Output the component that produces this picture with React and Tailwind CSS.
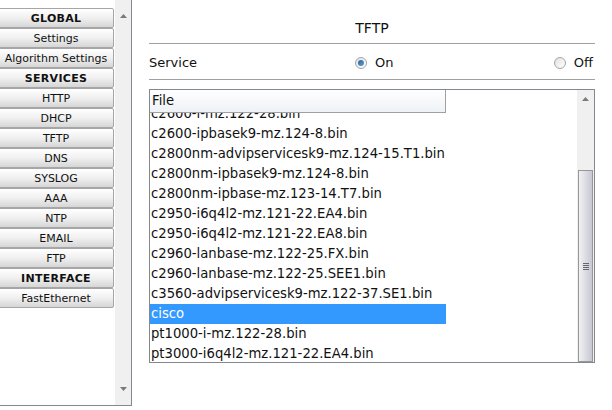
import React from "react";

const menu = [
  { label: "GLOBAL", head: true },
  { label: "Settings" },
  { label: "Algorithm Settings" },
  { label: "SERVICES", head: true },
  { label: "HTTP" },
  { label: "DHCP" },
  { label: "TFTP" },
  { label: "DNS" },
  { label: "SYSLOG" },
  { label: "AAA" },
  { label: "NTP" },
  { label: "EMAIL" },
  { label: "FTP" },
  { label: "INTERFACE", head: true },
  { label: "FastEthernet" },
];

const files = [
  "c2600-ipbasek9-mz.124-8.bin",
  "c2800nm-advipservicesk9-mz.124-15.T1.bin",
  "c2800nm-ipbasek9-mz.124-8.bin",
  "c2800nm-ipbase-mz.123-14.T7.bin",
  "c2950-i6q4l2-mz.121-22.EA4.bin",
  "c2950-i6q4l2-mz.121-22.EA8.bin",
  "c2960-lanbase-mz.122-25.FX.bin",
  "c2960-lanbase-mz.122-25.SEE1.bin",
  "c3560-advipservicesk9-mz.122-37.SE1.bin",
  "cisco",
  "pt1000-i-mz.122-28.bin",
  "pt3000-i6q4l2-mz.121-22.EA4.bin",
];

const font = { fontFamily: "Tahoma, 'DejaVu Sans', Verdana, sans-serif" };

function Arrow({ up }) {
  return (
    <svg width="7" height="4" viewBox="0 0 7 4">
      <path d={up ? "M0 4 L3.5 0 L7 4 Z" : "M0 0 L3.5 4 L7 0 Z"} fill="#7a7a7a" />
    </svg>
  );
}

function Radio({ checked }) {
  return (
    <span className="w-[12px] h-[12px] rounded-full border border-[#a4a4a4] bg-gradient-to-br from-[#e2e2e2] to-white flex items-center justify-center">
      {checked && <span className="w-[6px] h-[6px] rounded-full bg-gradient-to-br from-[#2b5f94] to-[#5fa2dd]" />}
    </span>
  );
}

export default function App() {
  return (
    <div className="w-[612px] h-[410px] bg-white relative overflow-hidden text-[#111]" style={font}>
      {/* left menu */}
      <div className="absolute left-0 top-0 w-[132px] h-[406px] border-r border-b border-[#828790] flex">
        <div className="w-[114px] pt-[8px] flex flex-col">
          {menu.map((m) => (
            <div
              key={m.label}
              className={`h-[20px] -ml-[2px] flex items-center justify-center border border-[#a6a6a6] rounded-[2px] bg-gradient-to-b from-white via-[#f0f0f0] to-[#d6d6d6] text-[11px] leading-none ${
                m.head ? "font-bold tracking-[0.3px]" : ""
              }`}
            >
              {m.label}
            </div>
          ))}
        </div>
        <div className="flex-1 ml-[1px] bg-[#f0f0f0] flex flex-col items-center justify-between py-[14px]">
          <Arrow up />
          <Arrow />
        </div>
      </div>

      {/* right panel */}
      <div className="absolute left-[149px] top-0 w-[446px]">
        <div className="h-[43px] flex items-center justify-center pt-[14px] text-[14px]">TFTP</div>
        <div className="h-[37px] border-t border-b border-[#a0a0a0] flex items-center pt-[2px] pr-[2px] text-[13px]">
          <span className="w-[206px]">Service</span>
          <span className="flex items-center gap-[8px]">
            <Radio checked />
            <span>On</span>
          </span>
          <span className="ml-auto flex items-center gap-[8px]">
            <Radio />
            <span>Off</span>
          </span>
        </div>

        <div className="mt-[9px] h-[274px] border border-[#828790] flex overflow-hidden">
          <div className="flex-1 flex flex-col overflow-hidden">
            <div className="h-[23px] w-[296px] shrink-0 border-r border-b border-[#a0a0a0] bg-gradient-to-b from-white to-[#eef2f6] flex items-center px-[2px] text-[13.2px]">
              File
            </div>
            <div className="flex flex-col text-[13.2px]">
              <div className="h-[11px] overflow-hidden flex flex-col justify-end">
                <div className="h-[20px] shrink-0 pl-[1px] flex items-center">c2600-i-mz.122-28.bin</div>
              </div>
              {files.map((f) => (
                <div
                  key={f}
                  className={`h-[20px] w-[296px] pl-[1px] flex items-center whitespace-nowrap ${
                    f === "cisco" ? "bg-[#3399ff] text-white" : ""
                  }`}
                >
                  {f}
                </div>
              ))}
            </div>
          </div>
          <div className="w-[17px] bg-[#f0f0f0] flex flex-col">
            <div className="h-[80px] flex justify-center pt-[7px]">
              <Arrow up />
            </div>
            <div className="flex-1 mx-[1px] border border-[#979797] bg-gradient-to-r from-[#f2f2f2] via-[#dcdce4] to-[#c8c8d4] flex items-center justify-center">
              <div className="flex flex-col gap-[1px]">
                <span className="w-[6px] h-[1px] bg-[#666]" />
                <span className="w-[6px] h-[1px] bg-[#666]" />
                <span className="w-[6px] h-[1px] bg-[#666]" />
                <span className="w-[6px] h-[1px] bg-[#666]" />
              </div>
            </div>
          </div>
        </div>
      </div>
    </div>
  );
}
